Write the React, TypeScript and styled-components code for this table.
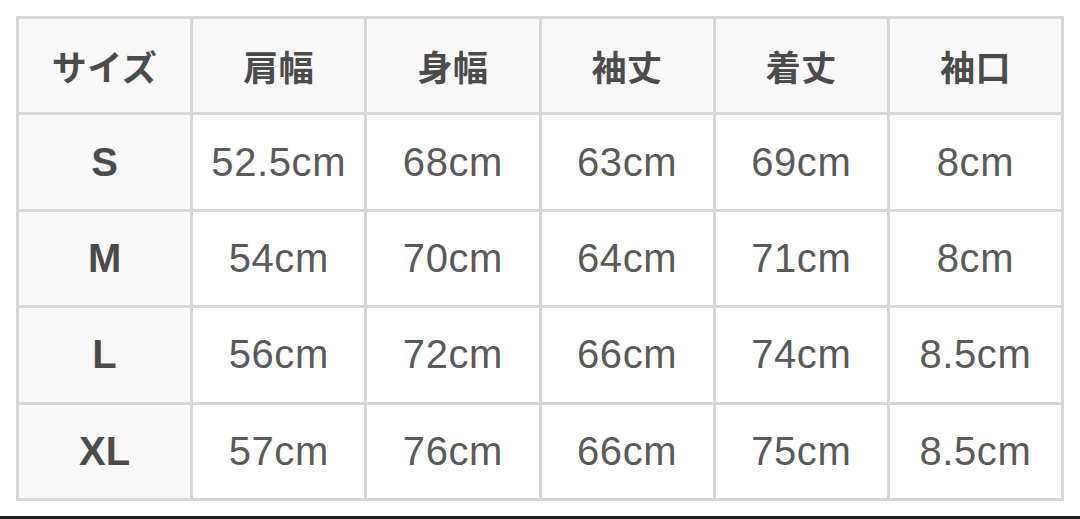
import * as React from 'react'
import styled, { createGlobalStyle } from 'styled-components'

const GlobalStyle = createGlobalStyle`
  html, body {
    margin: 0;
    padding: 0;
    background: #fff;
  }
  body {
    font-family: "Liberation Sans", "Noto Sans CJK JP", sans-serif;
  }
`

const Page = styled.div`
  width: 1080px;
  height: 519px;
  box-sizing: border-box;
  display: flex;
  flex-direction: column;
  overflow: hidden;
`

const Content = styled.div`
  flex: 1;
  padding: 16px 16px 0;
`

const Grid = styled.div`
  display: grid;
  grid-template-columns: repeat(6, 1fr);
  grid-auto-rows: 93.4px;
  gap: 3px;
  padding: 3px;
  width: 1048px;
  box-sizing: border-box;
  background: #d7d7d7;
`

const Cell = styled.div<{ $head?: boolean }>`
  display: flex;
  align-items: center;
  justify-content: center;
  background: ${p => (p.$head ? '#f8f8f8' : '#fff')};
  color: ${p => (p.$head ? '#4b4b4b' : '#5a5a5a')};
  font-family: "Liberation Sans", sans-serif;
  font-weight: ${p => (p.$head ? 700 : 400)};
  font-size: 40px;
  letter-spacing: ${p => (p.$head ? '0' : '0.6px')};
  white-space: nowrap;
`

const HeadLabel = styled.span`
  font-family: "Noto Sans CJK JP", sans-serif;
  font-size: 35px;
  font-weight: 700;
  letter-spacing: 0.5px;
`

const BottomRule = styled.div`
  height: 3px;
  background: #1f1f1f;
`

const headers = ['サイズ', '肩幅', '身幅', '袖丈', '着丈', '袖口']

const rows = [
  ['S', '52.5cm', '68cm', '63cm', '69cm', '8cm'],
  ['M', '54cm', '70cm', '64cm', '71cm', '8cm'],
  ['L', '56cm', '72cm', '66cm', '74cm', '8.5cm'],
  ['XL', '57cm', '76cm', '66cm', '75cm', '8.5cm'],
]

export default function App() {
  return (
    <Page>
      <GlobalStyle />
      <Content>
        <Grid>
          {headers.map(h => (
            <Cell key={h} $head>
              <HeadLabel>{h}</HeadLabel>
            </Cell>
          ))}
          {rows.map(row =>
            row.map((v, i) => (
              <Cell key={row[0] + i} $head={i === 0}>
                {v}
              </Cell>
            ))
          )}
        </Grid>
      </Content>
      <BottomRule />
    </Page>
  )
}
